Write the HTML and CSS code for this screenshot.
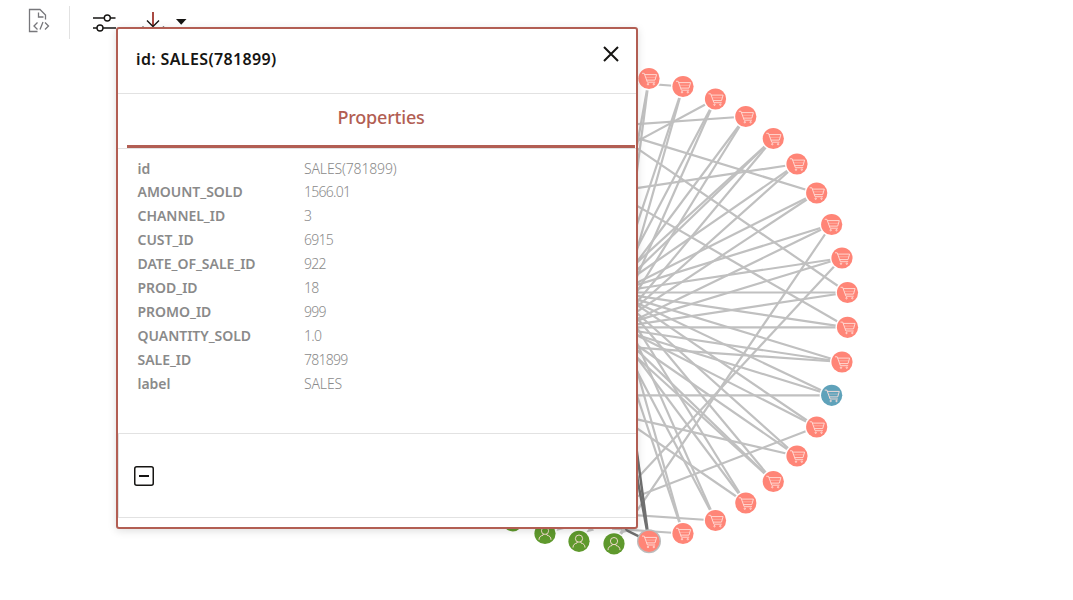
FILE: index.html
```html
<!DOCTYPE html>
<html lang="en">
<head>
<meta charset="utf-8">
<title>Graph</title>
<link rel="stylesheet" href="styles.css">
</head>
<body>
<div class="toolbar">
  <svg class="icon-code" width="24" height="28" viewBox="0 0 24 28"><path d="M10.500 24.500H2.500V2.500H13L18.500 8V12.500M11.500 5.500V10H16.500M10.500 15.500L7 19L10.500 22.500M18 15.500L21.500 19L18 22.500M16 15L13 22.500"/></svg>
  <span class="divider"></span>
  <svg class="icon-settings" width="26" height="22" viewBox="0 0 26 22"><path d="M1 6H12M18 6H23.500M1 16H5M11 16H24"/><circle cx="15.300" cy="6" r="3"/><circle cx="8" cy="16" r="3"/></svg>
  <svg class="icon-download" width="26" height="22" viewBox="0 0 26 22"><path class="stem" d="M13 1V15"/><path d="M7 9.500L13 15.500L19 9.500M3 15.500V20H23.500V15.500"/></svg>
  <svg class="icon-caret" width="12" height="8" viewBox="0 0 12 8"><path d="M0 1H10.500L5.200 6.700Z"/></svg>
</div>
<svg class="graph" id="graph" width="1073" height="600" viewBox="0 0 1073 600">
  <defs>
    <g id="cart"><path d="M-7-5.200H-4.800L-1.600 3.700H6.200M-4.300-3.900H7.600L6 1.600H-2.400"/><path class="faint" d="M-3.300-1.200H6.800"/><circle cx="-1" cy="5.700" r=".7"/><circle cx="4.800" cy="5.700" r=".7"/></g>
    <g id="person"><circle cx="0" cy="-2.700" r="3.600"/><path d="M-6 6.300C-6 3.600-4.500 2.300-2 1.700L-1.500.5M6 6.300C6 3.600 4.500 2.300 2 1.700L1.500.5"/></g>
  </defs>
</svg>
<section class="panel">
  <header class="panel-head"><h1>id: SALES(781899)</h1>
    <svg class="close" width="18" height="18" viewBox="0 0 18 18"><path d="M2 2L16 16M16 2L2 16"/></svg>
  </header>
  <div class="tabs"><div class="tab"><span>Properties</span></div></div>
  <dl class="props">
    <dt>id</dt><dd>SALES(781899)</dd>
    <dt>AMOUNT_SOLD</dt><dd class="num">1566.01</dd>
    <dt>CHANNEL_ID</dt><dd class="num">3</dd>
    <dt>CUST_ID</dt><dd class="num">6915</dd>
    <dt>DATE_OF_SALE_ID</dt><dd class="num">922</dd>
    <dt>PROD_ID</dt><dd class="num">18</dd>
    <dt>PROMO_ID</dt><dd class="num">999</dd>
    <dt>QUANTITY_SOLD</dt><dd class="num">1.0</dd>
    <dt>SALE_ID</dt><dd class="num">781899</dd>
    <dt>label</dt><dd>SALES</dd>
  </dl>
  <div class="actions"><svg width="20" height="20" viewBox="0 0 20 20"><rect x=".75" y=".75" width="18.500" height="18.500" rx="2"/><path d="M5 10H15"/></svg></div>
</section>
<script src="graph.js"></script>
</body>
</html>
```
FILE: styles.css
```css
body { margin: 0; width: 1073px; height: 600px; overflow: hidden; position: relative; background: #fff; font-family: "Noto Sans", sans-serif; color: #161513; }
.toolbar { display: flex; align-items: flex-start; height: 44px; padding-left: 27px; }
.toolbar svg { fill: none; stroke: #161513; stroke-width: 1.4; flex: none; }
.toolbar .icon-code { margin-top: 7px; stroke: #77777b; stroke-width: 1.3; }
.divider { width: 1px; height: 33px; margin: 6px 0 0 18px; background: #e2e2e2; }
.icon-settings { margin: 12px 0 0 22px; }
.icon-download { margin: 11px 0 0 22px; }
.toolbar .stem { stroke: #941c14; stroke-width: 1.6; }
.toolbar .icon-caret { margin: 18px 0 0 10px; fill: #161513; stroke: none; }
.graph { position: absolute; left: 0; top: 0; }
.edge { stroke: #c0c0c0; stroke-width: 2.2; }
.edge-dark { stroke: #707070; stroke-width: 2.5; }
.arrow { fill: #c4c4c4; }
.halo { fill: #fff; }
.selected { fill: #bcbcbc; }
.sale { fill: #ff8577; }
.sale-blue { fill: #5fa2ba; }
.customer { fill: #5f992d; }
.glyph { fill: none; stroke: #ffe0da; stroke-width: .9; }
.faint { opacity: .45; }
.panel { position: absolute; left: 116px; top: 27px; width: 522px; height: 502px; box-sizing: border-box; border: 2px solid #b25e53; border-radius: 3px; background: #fff; box-shadow: 0 2px 8px rgba(0,0,0,.13); display: flex; flex-direction: column; }
.panel-head { height: 64px; border-bottom: 1px solid #e2e2e2; display: flex; justify-content: space-between; padding: 0 16px 0 18px; }
.panel-head h1 { margin: 19px 0 0; font-size: 16px; line-height: 22px; font-weight: 600; letter-spacing: .36px; }
.close { margin-top: 16px; fill: none; stroke: #161513; stroke-width: 2; }
.tabs { height: 54px; border-bottom: 1px solid #e2e2e2; padding: 0 1px 0 9px; }
.tab { height: 51px; border-bottom: 3px solid #b25e53; color: #b25e53; font-size: 18px; line-height: 47px; font-weight: 500; letter-spacing: -.2px; text-align: center; }
.props { display: grid; grid-template-columns: 166.500px 1fr; grid-auto-rows: 23.900px; margin: 0; padding: 7.500px 0 0 19.500px; height: 276.500px; font-size: 14px; line-height: 23.900px; color: #8a8a8a; }
.props dt { font-weight: 600; letter-spacing: -.03px; }
.props dd { margin: 0; font-weight: 300; letter-spacing: -.15px; }
.props .num { letter-spacing: -.75px; }
.actions { height: 51px; border: solid #e2e2e2; border-width: 1px 0 1px 1px; padding: 32px 0 0 15px; }
.actions svg { display: block; fill: none; stroke: #161513; stroke-width: 1.5; }
.actions path { stroke-width: 2; }
```
FILE: graph.js
```js
const svg = document.getElementById('graph');
const NS = 'http://www.w3.org/2000/svg';
function add(tag, attrs) {
  const el = document.createElementNS(NS, tag);
  for (const key in attrs) el.setAttribute(key, attrs[key]);
  svg.appendChild(el);
}

const nodes = [
  [649, 78.5], [683, 86.5], [715.5, 99], [745.8, 116.5], [773.3, 138.5],
  [797, 164], [816.7, 193], [831.7, 224.5], [842, 258], [847.5, 292.5],
  [847.5, 327.3], [842, 362], [831.7, 395.3], [816.7, 427], [797, 456],
  [773.3, 481.5], [745.8, 503], [715.5, 520.5], [683, 533.5], [649, 541.3]
];
// Slopes of the edges that leave each node towards the left side of the ring.
// A negative slope heads down and to the left.
const slopes = [
  [-5.6, -7.7], [-3.0, -3.55, 0.077], [-1.9, -2.26, -0.54], [-1.335, -1.61, -0.07],
  [-0.91, -0.965, -1.2], [-0.692, -0.893, -0.151], [-0.5, -0.66, 0.306],
  [-0.31, -0.486, -1.47], [-0.15, -0.305, -1.076], [0, -0.151, 0.685],
  [0, 0.149, 0.577], [0.15, 0.305, 0.07], [0, 0.31, 0.475],
  [0.51, 0.68, -0.386], [0.692, 0.893, 0.229], [0.91, 0.965, 1.2],
  [1.335, 1.61, 0.686], [1.9, 2.26, 0.066], [3.0, 3.55, 0.07], [5.4, 7.4, 0.49]
];

nodes.forEach(([x, y], i) => {
  slopes[i].forEach(k => {
    const left = 612;
    add('line', { x1: x, y1: y, x2: left, y2: y - k * (x - left), class: i === 19 ? 'edge-dark' : 'edge' });
  });
});
[[560, 529], [590, 530.5], [622.5, 532]].forEach(([x, y]) => {
  add('path', { d: `M${x - 4} ${y + 2}L${x + 1} ${y - 5}L${x + 4} ${y}Z`, class: 'arrow' });
});

function node(x, y, fill, icon, halo) {
  add('circle', { cx: x, cy: y, r: 12, class: halo });
  add('circle', { cx: x, cy: y, r: 10.6, class: fill });
  add('use', { href: '#' + icon, x, y, class: 'glyph' });
}
nodes.forEach(([x, y], i) => node(x, y, i === 12 ? 'sale-blue' : 'sale', 'cart', i === 19 ? 'selected' : 'halo'));
[[614, 543.8], [579, 541.3], [545, 533.5], [512.8, 520.8]].forEach(([x, y]) => node(x, y, 'customer', 'person', 'halo'));
```
